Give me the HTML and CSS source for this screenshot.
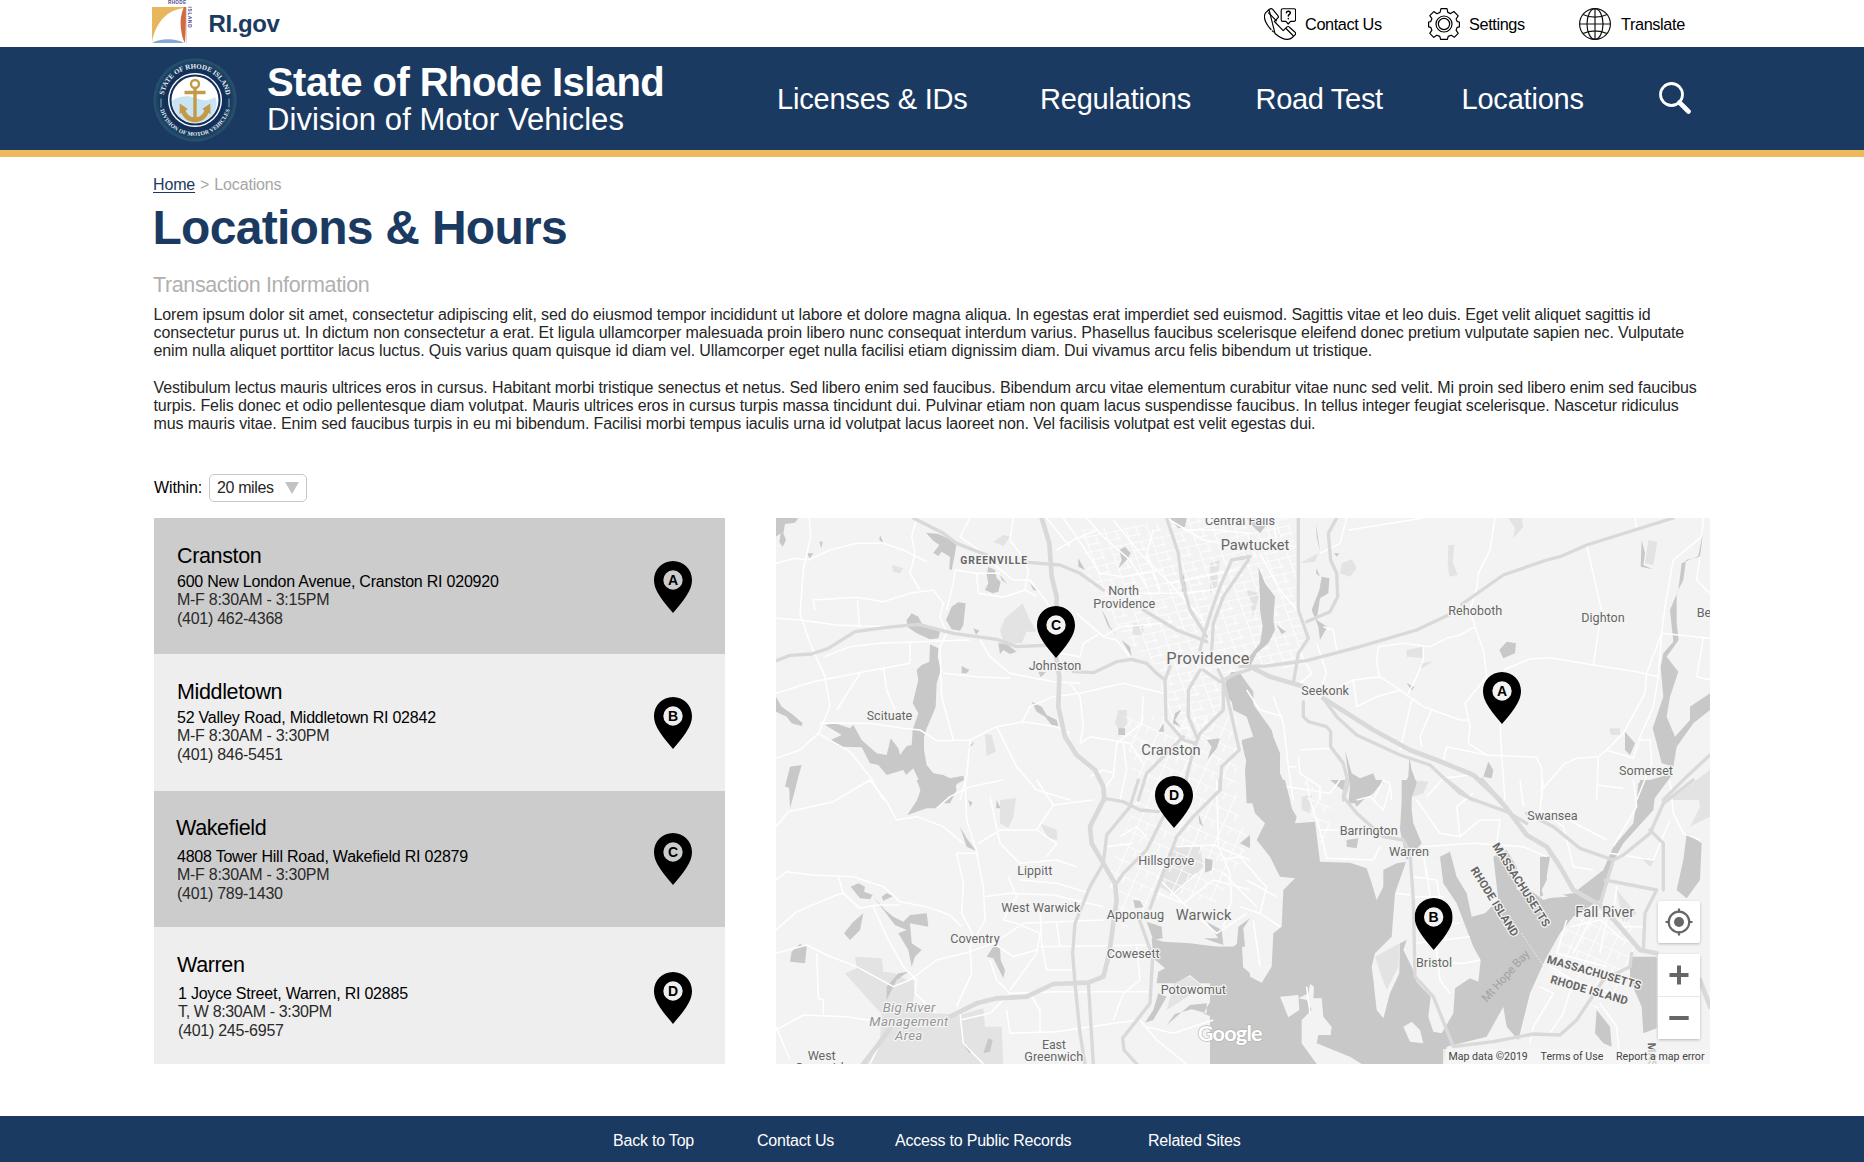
FILE: index.html
```html
<!DOCTYPE html>
<html lang="en">
<head>
<meta charset="utf-8">
<title>Locations &amp; Hours - Rhode Island DMV</title>
<link rel="stylesheet" href="styles.css">
</head>
<body>
<svg class="defs" width="0" height="0" aria-hidden="true">
  <symbol id="pin" viewBox="0 0 38 52"><path fill-rule="evenodd" d="M19 0C8.4 0 0 8.4 0 19c0 6.2 2.8 11.500 6 16.500C10 41.500 15 47 19 52c4-5 9-10.500 13-16.500 3.200-5 6-10.300 6-16.500C38 8.400 29.600 0 19 0zM19 9.300a9.700 9.700 0 1 1 0 19.400 9.700 9.700 0 0 1 0-19.400z"/></symbol>
</svg>

<div class="topbar">
  <a class="brand">
    <svg class="brand-logo" viewBox="0 0 42 46" width="42" height="46">
      <path d="M2 7H34V8C17 10 6 22 2 42z" fill="#eab65d"/>
      <path d="M34 7C31 14 30 20 31 29 32 36 33 40 35 43 36 30 36 18 36 7z" fill="#d2693f"/>
      <path d="M2 43C10 38 26 38 34 43z" fill="#87a6d2"/>
      <path d="M36.500 7V43" stroke="#dcdcea" stroke-width="1.200"/>
      <text x="18" y="4.400" class="logo-word" textLength="18">RHODE</text>
      <text transform="translate(37.800 6.500) rotate(90)" class="logo-word" textLength="21">ISLAND</text>
    </svg>
    <span class="brand-name">RI.gov</span>
  </a>
  <div class="utils">
    <a class="util">
      <svg viewBox="0 0 32 32" width="32" height="32" fill="none" stroke="#000" stroke-width="1.150" stroke-linejoin="round" stroke-linecap="round">
        <path d="M5 1.500 1.800 4.700C-.3 7 .6 11.500 2 14.500c1.200 2.500 3 4.900 5 7M8.300 22.900l1 1M11 25.500c3.500 3 8 6 12.500 5.900 2 0 3.700-.8 4.800-1.900l2.700-2.700c.8-.8.8-1.800 0-2.600l-5.500-5c-.8-.8-2-.8-2.800 0l-3.500 3.500-8.800-9.200 3.300-3.300c.8-.8.8-2 0-2.800l-5-6c-.9-.9-2.200-.9-3.700.1z"/>
        <path d="M4.500 4.800l8 8M22 20.500l7 7"/>
        <path d="M18.800.7H30c.9 0 1.600.7 1.600 1.600v9.500c0 .9-.7 1.600-1.600 1.600h-3.500l-2.300 2.600-2.300-2.600h-3.100c-.9 0-1.600-.7-1.600-1.600V2.300c0-.9.700-1.600 1.600-1.600z"/>
        <path d="M22.400 4.800c.2-2.200 3.900-2.100 3.900.1 0 1.600-2 1.500-2 3.200M24.300 10.600v.2" stroke-width="1.500"/>
      </svg>
      <span>Contact Us</span>
    </a>
    <a class="util settings">
      <svg viewBox="0 0 32 32" width="32" height="32" fill="none" stroke="#000" stroke-width="1.200" stroke-linejoin="round">
        <path d="M13 .7h6l.8 3.700 2.900 1.200 3.200-2.100 4.300 4.300-2.100 3.200 1.100 2.600 2.200.4v4.800l-2.200.5-1.100 2.800 2.100 3.200-3.700 3.900-3.300-2-3 1.200-.8 3h-6.800l-.8-3-2.900-1.200-3.200 2.100-3.900-3.900 2.100-3.200-1.200-2.900-2.100-.5v-4.800l2.100-.4 1.200-2.900-2.100-3.100 4-4 3.100 2.100 3.100-1.300z"/>
        <circle cx="16" cy="16" r="8"/><circle cx="16" cy="16" r="5.600"/>
      </svg>
      <span>Settings</span>
    </a>
    <a class="util">
      <svg viewBox="0 0 32 32" width="32" height="32" fill="none" stroke="#111" stroke-width="1.200">
        <circle cx="16" cy="16" r="15.400"/><ellipse cx="16" cy="16" rx="8" ry="15.400"/>
        <path d="M16 .6v30.800M.6 16h30.800M4 6.500c7 3.500 17 3.500 24 0M4 25.500c7-3.500 17-3.500 24 0"/>
      </svg>
      <span class="translate">Translate</span>
    </a>
  </div>
</div>

<header class="header">
  <svg class="seal" viewBox="0 0 86 86" width="86" height="86">
    <defs>
      <radialGradient id="ring"><stop offset=".7" stop-color="#12305a"/><stop offset=".87" stop-color="#173c60"/><stop offset="1" stop-color="#2b556f"/></radialGradient>
      <path id="arcTop" d="M11.500 43a31.500 31.500 0 0 1 63 0"/>
      <path id="arcBottom" d="M7 43a36 36 0 0 0 72 0"/>
      <clipPath id="disc"><circle cx="43" cy="43" r="23"/></clipPath>
    </defs>
    <circle cx="43" cy="43" r="41.500" fill="url(#ring)"/>
    <circle cx="43" cy="43" r="27" fill="#fff"/><circle cx="43" cy="43" r="25.600" fill="#12305a"/><circle cx="43" cy="43" r="23.500" fill="#fff"/>
    <path clip-path="url(#disc)" d="M18 45C26 39 36 38 44 41c7 3 13 3 19-1 6 12-6 28-20 27-14 0-24-9-25-22z" fill="#c9e4f3"/>
    <g fill="none" stroke="#c39a48" stroke-width="4.200"><circle cx="43" cy="27" r="4" stroke-width="2.400"/><path d="M43 31v33M32.500 35.500h21" stroke-width="3.400"/><path d="M30.500 51c1.500 8.500 7 11.500 12.500 12 5.500-.5 11-3.500 12.500-12" stroke-width="4.600"/></g>
    <path d="M27.500 57l.3-10.500 8 5.500zM58.500 57l-.3-10.500-8 5.500z" fill="#c39a48"/>
    <text class="seal-top"><textPath href="#arcTop" startOffset="5" textLength="89">STATE OF RHODE ISLAND</textPath></text>
    <text class="seal-bottom"><textPath href="#arcBottom" startOffset="10" textLength="93">DIVISION OF MOTOR VEHICLES</textPath></text>
    <path d="M9 41.500v9M77 41.500v9" stroke="#8ba3b5" stroke-width="1"/>
  </svg>
  <div class="titles">
    <div class="state">State of Rhode Island</div>
    <div class="division">Division of Motor Vehicles</div>
  </div>
  <nav class="nav">
    <a>Licenses &amp; IDs</a><a>Regulations</a><a class="road-test">Road Test</a><a>Locations</a>
    <svg class="search" viewBox="0 0 32 32" width="32" height="32" fill="none" stroke="#fff" stroke-linecap="round"><circle cx="12.500" cy="12.500" r="11" stroke-width="2.800"/><path d="M20.500 20.500 29.500 29.500" stroke-width="4.600"/></svg>
  </nav>
</header>

<main class="main">
  <div class="crumbs"><a>Home</a><span class="sep">&gt;</span><span>Locations</span></div>
  <h1>Locations &amp; Hours</h1>
  <h2>Transaction Information</h2>
  <p>Lorem ipsum dolor sit amet, consectetur adipiscing elit, sed do eiusmod tempor incididunt ut labore et dolore magna aliqua. In egestas erat imperdiet sed euismod. Sagittis vitae et leo duis. Eget velit aliquet sagittis id<br>consectetur purus ut. In dictum non consectetur a erat. Et ligula ullamcorper malesuada proin libero nunc consequat interdum varius. Phasellus faucibus scelerisque eleifend donec pretium vulputate sapien nec. Vulputate<br>enim nulla aliquet porttitor lacus luctus. Quis varius quam quisque id diam vel. Ullamcorper eget nulla facilisi etiam dignissim diam. Dui vivamus arcu felis bibendum ut tristique.</p>
  <p class="tight">Vestibulum lectus mauris ultrices eros in cursus. Habitant morbi tristique senectus et netus. Sed libero enim sed faucibus. Bibendum arcu vitae elementum curabitur vitae nunc sed velit. Mi proin sed libero enim sed faucibus<br>turpis. Felis donec et odio pellentesque diam volutpat. Mauris ultrices eros in cursus turpis massa tincidunt dui. Pulvinar etiam non quam lacus suspendisse faucibus. In tellus integer feugiat scelerisque. Nascetur ridiculus<br>mus mauris vitae. Enim sed faucibus turpis in eu mi bibendum. Facilisi morbi tempus iaculis urna id volutpat lacus laoreet non. Vel facilisis volutpat est velit egestas dui.</p>

  <div class="filter">
    <span>Within:</span>
    <div class="select"><span>20 miles</span><i class="caret"></i></div>
  </div>

  <div class="columns">
    <div class="list">
      <section class="office dark">
        <div><h3>Cranston</h3><div class="addr">600 New London Avenue, Cranston RI 020920</div><div>M-F 8:30AM - 3:15PM</div><div>(401) 462-4368</div></div>
        <svg class="pin" viewBox="0 0 38 52" width="38" height="52"><use href="#pin"/><text x="19" y="24">A</text></svg>
      </section>
      <section class="office">
        <div><h3>Middletown</h3><div class="addr">52 Valley Road, Middletown RI 02842</div><div>M-F 8:30AM - 3:30PM</div><div>(401) 846-5451</div></div>
        <svg class="pin" viewBox="0 0 38 52" width="38" height="52"><use href="#pin"/><text x="19" y="24">B</text></svg>
      </section>
      <section class="office dark wakefield">
        <div><h3>Wakefield</h3><div class="addr">4808 Tower Hill Road, Wakefield RI 02879</div><div>M-F 8:30AM - 3:30PM</div><div>(401) 789-1430</div></div>
        <svg class="pin" viewBox="0 0 38 52" width="38" height="52"><use href="#pin"/><text x="19" y="24">C</text></svg>
      </section>
      <section class="office warren">
        <div><h3>Warren</h3><div class="addr">1 Joyce Street, Warren, RI 02885</div><div class="hours">T, W 8:30AM - 3:30PM</div><div>(401) 245-6957</div></div>
        <svg class="pin" viewBox="0 0 38 52" width="38" height="52"><use href="#pin"/><text x="19" y="24">D</text></svg>
      </section>
    </div>

    <div class="map">
      <svg viewBox="18 24 2802 1638" width="934" height="546">
        <defs>
          <pattern id="streets" width="62" height="46" patternUnits="userSpaceOnUse" patternTransform="rotate(-12) skewX(8)"><path d="M0 1H62M1 0V46M32 0V30M0 25H40" class="street"/></pattern>
          <pattern id="streets2" width="58" height="44" patternUnits="userSpaceOnUse" patternTransform="rotate(24)"><path d="M0 1H58M1 0V44M28 0V22" class="street"/></pattern>
        </defs>

        <g class="park">
          <path d="M758 280 775 320 800 365 770 365 755 400 700 400 690 360 705 325 735 300zM1090 340 1122 342 1118 380 1088 372zM1045 600 1070 600 1072 640 1050 665 1035 640zM645 672 665 675 678 725 650 738zM670 95 700 75 720 80 700 108zM365 165 400 175 390 190 370 185zM1320 160 1350 150 1340 230 1320 250z"/>
          <g transform="translate(1410)"><path d="M305 160 335 148 350 175 330 200 300 190zM625 105h18l-5 50 15 40-25 5-5-40zM805 24H845L850 50 820 85 825 55zM500 420 550 410 550 445 500 440zM1225 90 1252 95 1240 165 1215 160zM1290 870 1410 780V870zM540 460 578 455 545 475zM1108 655H1140V675H1112zM510 810 565 815 550 850 520 860zM180 160 235 130 225 155zM20 240 60 250 40 320z"/></g>
          <g transform="translate(0 810)"><path d="M255 530 335 535 340 575 375 580 410 600 430 600 435 640 420 695 500 700 570 705 640 685 645 740 695 740 700 852H285L330 780 335 700 305 670 225 580 260 565zM690 60 738 55 730 110 715 145 690 130zM1200 200H1290L1300 260 1215 345 1170 320zM810 130 860 150 862 180 835 175zM1215 600 1260 590 1300 620 1190 690z"/></g>
          <g transform="translate(1410 810)"><path d="M185 50 215 45 210 100 185 90zM1370 0H1410V110L1350 140 1380 80zM1130 330 1190 400 1150 430zM1200 230 1245 240 1230 260z"/></g>
        </g>

        <g>
          <path fill="url(#streets)" d="M930 60 1180 40 1290 24H1560L1600 300 1600 480 1430 470 1380 520 1340 640 1290 700 1180 640 1170 480 1080 400 1030 330 960 220z"/>
          <path fill="url(#streets2)" d="M1060 620 1400 620 1400 900 1440 1000 1340 1180 1200 1150 1060 1260 1010 1100 1100 870zM2400 1210 2580 1200 2600 1380 2480 1500 2330 1400zM1600 810 1690 880 1660 1040 1620 900z"/>
        </g>

        <g class="water">
          <path d="M18 24H85L75 38 45 42 40 70 48 90 38 110 28 95 32 70 18 80zM468 68 505 72 540 88 560 100 555 130 545 180 538 178 540 140 515 125 505 138 490 128 508 105 490 92zM655 170 675 180 680 205 692 215 685 245 668 250 645 240 655 220 650 195zM565 277 587 280 580 345 570 362 545 358 528 330 545 290zM425 310 445 320 455 340 510 365 505 385 480 388 440 370 412 350 410 330zM685 400 710 402 740 425 720 432 700 420 690 432z"/>
          <path d="M480 403 505 415 503 440 512 480 500 520 497 590 485 620 470 655 462 680 462 720 470 765 490 790 520 795 540 805 580 797 582 810 555 825 560 840 540 880H438L455 830 430 775 408 795 400 780 350 795 325 765 300 760 275 712 210 710 182 690 215 675 165 645 195 640 240 655 250 645 275 690 320 730 350 735 362 685 385 715 390 735 410 708 425 705 428 660 445 610 428 580 445 510 440 480 455 465 478 455z"/>
          <path d="M18 560 35 590 70 615 98 640 95 648 65 640 50 620 18 605zM60 770 95 765 85 800 65 870H58L70 835 45 830zM575 468 598 480 590 490 575 490zM1065 110 1082 130 1070 150 1045 175 1055 150 1048 120zM785 575 815 590 830 615 860 630 865 650 845 645 825 620 800 605zM1200 24H1250L1245 50 1225 55zM1365 520 1385 485 1410 490 1450 545V640L1400 590 1370 560zM1415 695 1450 690V810L1425 740zM1240 190 1250 240 1245 260 1235 240zM1235 598 1215 630 1232 650 1208 640 1215 610zM1045 655H1065V675H1045zM995 300 1010 325 1020 350 1040 375 1015 350zM1055 390 1080 410 1085 440zM925 145 945 180 925 170zM690 195 712 222 695 210zM780 220 802 242 790 240zM330 75 340 98 328 90zM110 130 130 130 120 145zM610 355 628 362 618 374zM805 485 828 487 812 502zM590 715 612 695 608 705zM1165 665 1180 640 1182 665zM148 96 158 94 154 115zM1310 690 1350 685 1340 715 1312 750 1325 710z"/>
          <g transform="translate(1410)">
            <path d="M55 170 75 220 105 260 100 330 105 360 85 400 50 430 30 470 20 450 60 400 68 350 60 300 60 260zM20 24H80L75 50 60 70 40 50zM245 200 268 205 265 250 240 265 230 330 262 350 240 390 235 350 215 300 238 240zM228 40 240 125 230 80zM230 175 240 200 228 190zM-30 545 20 545 45 590 95 660 100 680 120 730 120 790 138 830 138 880H20L15 780 20 740 5 690 40 680 20 620-20 600zM315 720 335 790 360 805 400 790 415 830 400 850 355 880H325L330 830zM488 880V830L505 800 508 740 515 780 530 820 510 880zM800 395 828 400 825 430 790 445 778 420zM1155 665 1185 700 1170 735 1155 720zM745 755 760 780 755 805 730 800zM1205 90 1215 130 1210 165 1238 178 1202 170zM500 520 523 530 515 542zM110 345 138 365 125 372zM282 130 298 130 290 140z"/>
            <path d="M1390 60 1380 140 1338 150 1330 210 1310 250 1310 340 1316 390 1280 440 1315 485 1290 560 1280 620 1305 680 1350 630 1350 590 1410 550V600L1360 640 1310 710 1300 770 1265 760 1250 700 1238 655 1270 560 1262 470 1270 430 1300 395 1290 300 1315 240 1325 160 1375 138zM1195 820 1300 790 1240 870H1190z"/>
          </g>
          <g transform="translate(0 810)">
            <path d="M440 0H565L545 50 500 85 470 85 412 105 455 40zM50 0H82L75 30 60 85 58 30zM242 320 265 310 285 320 282 335 308 345 300 358 270 355zM335 350 350 340 370 348 340 362zM310 350 345 390 370 410 400 425 420 405 470 400 475 440 420 430 425 490 455 510 435 530 425 560 415 510 385 460 410 450 375 435zM280 400 270 450 240 480 222 460 250 425zM90 492 110 500 105 550 60 545 65 515zM670 500 690 500 692 540 705 570 700 595 685 565 670 535 650 530zM1305 235 1328 240 1325 270 1305 278zM570 140 590 175 618 212 590 200zM1090 360 1110 362 1120 382 1095 385zM350 660 350 620 385 580 415 575 380 600zM578 790 605 815 598 820zM640 820 655 775 668 780 660 815zM595 60 608 68 600 80zM680 60 692 85 678 85zM1285 100 1300 140 1288 130z"/>
            <path d="M1145 475 1180 485 1260 490 1300 495 1345 500 1415 500 1418 560 1440 580V852H1355L1335 715 1300 700 1330 650 1370 610 1290 610 1260 585 1215 610 1160 610 1165 575 1185 565 1150 535zM1130 425 1175 440 1178 475 1150 480zM1165 640 1190 650 1150 720 1125 728 1150 690zM1310 670 1260 675 1190 735 1215 702 1265 688 1310 700zM1310 425 1355 450 1360 495 1300 475 1345 475zM1440 415 1405 440 1400 500 1425 500 1420 445zM1410 190 1440 165V205z"/>
          </g>
          <g transform="translate(1410 810)">
            <path d="M18 0H135L150 60 165 130 225 125 240 245 330 248 380 265 395 310 410 360 430 320 430 270 470 250 600 230 630 215 650 290 680 340 695 410 735 400 775 360 760 230 800 210 830 260 830 330 870 330 910 360 960 345 1000 340 1090 270 1120 200 1180 130 1200 0H1250L1240 90 1150 190 1110 260 1080 360 1000 410 960 460 915 540 870 640 835 780 790 800 620 810 610 852H-90V500H-20L5 480 10 580 65 608 95 560 100 460 125 440 130 330 165 295 120 290 90 230 50 180 75 130 45 100z"/>
            <path d="M1340 160 1385 190 1380 300 1340 355 1310 330 1330 240zM1170 530H1250V745L1210 760 1205 680 1170 600zM1070 690 1110 740 1115 800 1090 790 1065 760zM340 60 350 30 400 0 440 0 390 40 350 80zM485 0H515L515 90 520 130 545 190 500 240 480 150 485 60zM900 230 930 230 920 290 925 340 900 350zM270 0H330L320 40zM320 180 355 175 350 205 320 200zM140 60 170 110 165 130z"/>
          </g>
        </g>

        <g class="land" transform="translate(1410 810)">
          <path d="M455 470 465 340 500 240 600 230 610 310 650 370 700 500 722 540 715 605 690 595 645 625 640 700 605 760 580 755 565 710 572 650 530 605 515 560 490 510 500 480 480 490 478 580 450 640 430 715 410 690 400 600 395 560 405 520zM120 650 175 645 178 690 145 712zM210 612 222 620 220 655 245 655 250 710 275 740 272 765 235 765 230 790 330 830 365 852H230L185 790 185 720 215 690 200 660 175 655 205 640zM490 740 515 725 540 750 550 790 510 785zM610 852 620 800 740 770 790 680 800 740 835 780H900V852zM690 330 740 290 760 350 740 395 700 405zM912 355 905 330 925 290 945 300 935 330 985 350z"/>
        </g>
        <path class="park" transform="translate(1410 810)" d="M405 530 480 490 475 560 440 630 425 590z"/>

        <g class="minor">
          <path d="M118 24 122 80 100 180 90 310 120 400 165 500 180 590 145 670 90 720 18 745M18 160 75 145 115 150 180 120 260 100 340 100 400 120 470 155M18 325 90 330 200 345 270 348 410 350M135 300 130 270 260 262 340 275 420 250 490 240 520 280 510 320 530 370 510 410 515 560 550 690M262 270 268 348M440 24 425 80 435 130 420 190 450 240M18 550 130 515 260 490 420 460 420 400M165 440 240 410 330 400 450 395 600 390M270 490 200 600M340 470 350 540 375 600M150 640 300 640 400 655 450 660 500 692 600 690 680 650 760 635 860 650 900 670M680 650 740 770 800 840 900 870M145 670 240 725 300 800 340 870M600 24 570 80 640 130 680 170 730 210 780 210 840 290M730 24 720 90 750 130 775 180 765 240 800 260M555 180 620 190 690 190M620 190 625 250 700 262 765 240M530 300 550 220 555 180M630 390 660 440 720 490 850 515 930 520M520 490 620 500 720 505M755 640 780 590 850 560 930 550 1060 520 1180 550M600 690 590 800 570 870M880 24 940 110 990 190 1060 200 1180 180M950 24 1000 80 1080 150 1130 230M830 24 900 110M860 120 910 90 980 60M920 310 1000 380 1040 390 1080 440M870 430 930 440 940 400 990 370M1000 380 1050 350 1180 340M1120 560 1115 640 1040 700 1030 800 1000 840M930 700 960 680 1080 700 1120 760M900 520 930 560 940 650 930 700M1060 700 1070 780 1050 870M960 800 1000 780 1030 790M1190 24 1300 90 1420 110M1030 30 1110 130 1200 220 1300 330M1150 60 1130 130 1170 240M1240 60 1340 60 1440 70M1200 220 1400 180M1100 250 1230 250 1330 240"/>
          <g transform="translate(1410)"><path d="M765 24 750 120 715 190 710 235 690 300 705 350 730 420 740 500 675 580 690 650 685 700 740 735 890 742 905 775V870M705 350 660 375 620 385 570 410 490 400 415 410 410 460 420 505M550 410 550 450 530 500 500 560M790 480 870 447 930 443 1060 465 1190 485 1255 500M1040 105 1075 260 1085 300 1060 465M1390 24 1385 80 1300 150 1275 290 1265 370 1220 490 1215 550 1150 670 1100 720 1180 745 1200 680 1240 590 1255 500 1265 370 1410 385M240 560 340 510 420 500 480 540 550 590 660 630 685 630M340 510 350 590 410 560 480 540M905 840 975 760 1010 745 1075 740 1100 720M1075 740 1070 870M1070 825 1150 835M515 570 480 720M575 600 540 680 545 710M1380 140 1370 210 1410 250M1390 385 1370 500 1410 510M325 60 550 24M320 24 300 100 240 130M780 640 785 735 795 870M740 735 620 710 610 750M690 795 610 805 560 860M100 560 130 640 145 770 160 870M145 770 170 770M180 720 270 715M175 740 180 790 240 830 240 870M20 540 60 600 130 620M180 430 215 490 180 520M260 490 240 540M230 400 260 490M250 350 280 360 290 420M60 130 120 240 180 310M100 24 110 100 170 110M1200 690 1230 690 1235 760 1190 870M1185 24 1190 60M400 870 430 810 450 820 455 870"/></g>
          <g transform="translate(0 810)"><path d="M18 140 55 95 190 65 300 0 350 65 380 120 440 110 520 140 580 190M500 85 540 50 600 20 700 0M18 300 50 275 130 285 250 290 340 320 390 365 470 380 540 405 575 440M18 450 80 395 200 345 220 340 270 385 320 375 390 375M205 290 220 340M18 520 110 495 170 525 260 560 370 620 420 600 500 540 600 515 670 490 760 430 1000 420M140 520 145 655 160 660V710M18 750 100 705 230 710 325 725M18 740 60 840M310 380 350 470 400 560 440 600 435 640 500 700M560 220H620L640 320 645 420 600 500 605 580 560 680M560 220 580 310 575 400 612 470M585 0 590 120 625 230M660 50 690 190 750 250 860 240 920 260M625 190 690 150 800 150 860 190 830 230M800 150 850 75 970 60M800 0 850 75M640 350 720 340 850 345 1000 380M715 290 740 350 700 420 740 430 810 460 800 520 720 630M750 300 860 310 960 340M810 380 815 490 830 570 910 570M670 490 730 530 800 510M660 540 680 600 720 640 660 700 570 720M710 690 720 760 860 755 1100 720M785 650 810 690V755M720 640 860 635 1140 635M860 430 870 500M810 500 1140 495M1100 500 1110 600 1060 640 1030 720M1050 170 1100 140 1130 170M1010 200 1090 190M1160 340 1240 370 1340 460 1430 400M1220 200 1330 195 1440 240M1340 0 1345 200 1380 280 1385 360 1360 440M1110 720 1160 780 1250 852M1130 740 1210 760 1330 720M570 700 580 790 640 852M340 770 300 852M1200 350 1280 280M1160 290 1240 370 1330 300 1440 330"/></g>
          <g transform="translate(1410 810)"><path d="M140 20 270 40 300 0M200 0 210 60 240 150 260 235 400 240 420 200M240 150 380 150 460 170M350 60 390 50 430 90 450 20M530 60 600 160 660 170 720 120 780 120M545 200 700 190 850 200 920 230M660 170 650 80 700 40M780 120 770 190M840 0 850 80M560 290 550 220M520 290 590 300M520 350 610 350M520 430 660 430M525 490 690 470M530 550 670 550 720 540M560 270 600 600 630 640M590 300 620 480M470 340 510 345M910 0 900 90 970 140 1000 260 1060 270M930 90 1100 180M1180 0 1190 80 1120 200M930 560 1000 600 1120 640M900 620 940 640 880 740 870 790M980 420 950 520 1100 560M990 440 1080 420 1150 480M1060 400 1000 520M1100 420 1080 520M1000 600 970 700 930 760M1080 670 1130 740 1140 852M1290 0 1300 100 1330 160 1380 180M1290 120 1240 240 1110 220M1130 320 1120 400 1100 400M1140 440 1210 440M-60 240 0 230 60 300 80 320 60 400 0 380M-50 280 50 380M20 300 110 350M40 420 60 560M60 400 120 440M200 620 210 700"/></g>
        </g>

        <g class="highway">
          <path class="thick" d="M815 24 838 100 845 200 860 260 858 440 868 500 865 590 885 680 920 735 975 780 1000 830 1003 870"/>
          <path d="M430 24 520 70 560 100 650 135M775 157 870 165 930 190 1000 240M1120 300 1220 360 1310 395M18 452 60 436 125 432 175 415 255 365 350 352 445 343 550 370 680 388 740 410 850 405M910 485 970 488 1040 455 1085 448 1130 460 1160 490 1185 510 1200 470M1185 510 1188 630 1240 690 1275 700M1190 24 1225 130 1235 210 1260 300 1310 380M1440 140 1385 150 1350 230 1325 300 1300 380 1290 420M1290 480 1255 540 1255 620 1280 680M1435 150 1360 260 1330 340 1325 420M1345 480 1360 510 1360 600 1290 670 1270 720 1250 800 1240 870M1300 480 1350 515 1400 490 1440 478M1360 510 1408 720 1355 770 1350 840M1240 680 1130 790 1105 870"/>
          <g transform="translate(1410)"><path d="M0 470 80 468 200 452 360 410 530 360 625 315M665 283 790 195 920 150 960 140 1040 105 1300 24M250 565 290 620 350 675 480 735 570 765 660 850 700 870M175 24V300L205 385 175 430 160 520M290 24 265 70 272 150 290 190 293 260 270 305 200 335M190 575V620L205 635 260 650 272 665V710L310 760 325 820 310 870M1410 735 1340 800 1270 870M30 140 0 145"/><path class="thick" d="M30 470 90 500 185 528M250 565 400 660 510 720 590 750 700 795 780 870"/></g>
          <g transform="translate(0 810)"><path class="thick" d="M1003 55 960 140 965 190 1000 250 1035 310 1040 360 1030 430 1018 520 1000 590 955 608 850 612 770 650 680 655 620 670 540 710M360 745 320 800 280 852"/><path d="M1105 0 1080 80 1010 165 1000 250 960 320 915 430 908 520 915 610 930 760 945 852M955 608 970 852M1003 55 1060 65 1110 90 1165 95M1350 0V30L1270 110 1220 170 1175 290 1140 385M1180 110 1130 210 1060 280 1040 310M1105 410 1130 480 1148 530 1140 670 1058 775 1062 810 1100 852"/></g>
          <g transform="translate(1410 810)"><path d="M620 0 690 55 800 95 860 130M860 100 940 140 1020 205 1120 240 1150 225 1230 160 1270 70 1360 0M1120 240 1080 375M1095 300 1250 330 1215 400 1210 510M1230 150 1270 190V330M320 0 310 50 350 100 430 170 490 180 510 220 520 360 525 590 580 650 640 800 760 785 880 762 960 765 1010 720 1090 600 1170 560 1175 520"/><path class="thick" d="M725 0 800 85 860 165 920 200 960 260 1000 330 1080 375 1140 440 1200 510 1250 520M1380 600 1410 680"/></g>
        </g>
        <path class="border" d="M2255 1270 2318 1365"/>

        <g class="labels">
          <g class="town">
            <text x="571" y="163" textLength="200" class="caps">GREENVILLE</text>
            <text x="1015" y="255" textLength="92">North</text><text x="970" y="294" textLength="186">Providence</text>
            <text x="776" y="480" textLength="158">Johnston</text><text x="290" y="630" textLength="137">Scituate</text>
            <text x="1305" y="45" textLength="210">Central Falls</text>
            <text x="1352" y="120" textLength="206" class="mid">Pawtucket</text>
            <text x="1114" y="735" textLength="178" class="mid">Cranston</text>
            <text x="1189" y="462" textLength="249" class="big">Providence</text>
            <text x="2035" y="316" textLength="162">Rehoboth</text><text x="2434" y="336" textLength="130">Dighton</text><text x="2780" y="322">Berkley</text>
            <text x="1594" y="555" textLength="143">Seekonk</text><text x="2547" y="796" textLength="162">Somerset</text>
            <text x="742" y="1095" textLength="105">Lippitt</text><text x="1105" y="1066" textLength="168">Hillsgrove</text>
            <text x="694" y="1205" textLength="237">West Warwick</text><text x="1010" y="1227" textLength="172">Apponaug</text>
            <text x="1217" y="1229" textLength="167" class="mid">Warwick</text><text x="541" y="1298" textLength="148">Coventry</text>
            <text x="1010" y="1344" textLength="159">Cowesett</text><text x="1172" y="1451" textLength="196">Potowomut</text>
            <text x="816" y="1616" textLength="72">East</text><text x="763" y="1654" textLength="177">Greenwich</text>
            <text x="113" y="1650" textLength="84">West</text><text x="75" y="1687" textLength="158">Greenwich</text>
            <text x="1709" y="976" textLength="174">Barrington</text><text x="1857" y="1039" textLength="120">Warren</text>
            <text x="2272" y="929" textLength="151">Swansea</text><text x="1938" y="1370" textLength="108">Bristol</text>
            <text x="2416" y="1220" textLength="177" class="mid">Fall River</text>
          </g>
          <g class="area"><text x="338" y="1506" textLength="158">Big River</text><text x="298" y="1548" textLength="237">Management</text><text x="375" y="1590" textLength="82">Area</text></g>
          <text class="bay" transform="translate(2150 1478) rotate(-48)" textLength="195">Mt Hope Bay</text>
          <g class="state-label">
            <text transform="translate(2166 1008) rotate(57.500)" textLength="290">MASSACHUSETTS</text>
            <text transform="translate(2101 1080) rotate(58)" textLength="238">RHODE ISLAND</text>
            <text transform="translate(2329 1358) rotate(16)" textLength="292">MASSACHUSETTS</text>
            <text transform="translate(2339 1418) rotate(16)" textLength="240">RHODE ISLAND</text>
            <text transform="translate(2633 1598) rotate(88)">MASSACHUSETTS</text>
          </g>
          <text class="google" x="1283" y="1594" textLength="195">Google</text>
        </g>

        <g class="map-pins">
          <g transform="translate(801 288) scale(3)"><circle class="pin-bg" cx="19" cy="19" r="10"/><use href="#pin" width="38" height="52"/><text x="19" y="24">C</text></g>
          <g transform="translate(1155 798) scale(3)"><circle class="pin-bg" cx="19" cy="19" r="10"/><use href="#pin" width="38" height="52"/><text x="19" y="24">D</text></g>
          <g transform="translate(2139 486) scale(3)"><circle class="pin-bg" cx="19" cy="19" r="10"/><use href="#pin" width="38" height="52"/><text x="19" y="24">A</text></g>
          <g transform="translate(1934 1164) scale(3)"><circle class="pin-bg" cx="19" cy="19" r="10"/><use href="#pin" width="38" height="52"/><text x="19" y="24">B</text></g>
        </g>
      </svg>
      <div class="controls">
        <button class="locate" aria-label="Locate"><svg viewBox="0 0 28 28" width="28" height="28" fill="none" stroke="#666" stroke-width="2.200"><circle cx="14" cy="14" r="10.300"/><path d="M14 .5v4M14 23.500v4M.5 14h4M23.500 14h4"/><circle cx="14" cy="14" r="5" fill="#666" stroke="none"/></svg></button>
        <div class="zoom">
          <button aria-label="Zoom in"><svg viewBox="0 0 20 20" width="20" height="20"><path d="M8 .5h4V8h7.500v4H12v7.500H8V12H.5V8H8z" fill="#666"/></svg></button>
          <button aria-label="Zoom out"><svg viewBox="0 0 20 20" width="20" height="20"><path d="M.3 8h19.400v4H.3z" fill="#666"/></svg></button>
        </div>
      </div>
      <div class="credits"><span>Map data ©2019</span><span>Terms of Use</span><span class="report">Report a map error</span></div>
    </div>
  </div>
</main>

<footer class="footer"><a>Back to Top</a><a>Contact Us</a><a>Access to Public Records</a><a>Related Sites</a></footer>
</body>
</html>
```
FILE: styles.css
```css
* { box-sizing: border-box; }
body { margin: 0; background: #fff; color: #000; font-family: "Liberation Sans", Arial, sans-serif; font-size: 16px; line-height: 18.2px; white-space: nowrap; overflow: hidden; }
h1, h2, h3, p { margin: 0; }
svg { display: block; flex: none; }
.defs { position: absolute; }

.topbar { height: 47px; display: flex; justify-content: space-between; padding: 0 179px 0 150px; }
.brand { display: flex; align-items: center; gap: 16.500px; }
.brand-logo { align-self: flex-start; }
.brand-name { font-size: 24px; line-height: 24px; font-weight: 700; letter-spacing: -.4px; color: #1b3a61; }
.logo-word { font: bold 4.600px "Liberation Sans", sans-serif; fill: #4a4a8c; }
.utils { display: grid; grid-template-columns: 164px 151px 106px; }
.util { display: flex; align-items: center; gap: 9px; font-size: 16.300px; line-height: 18px; letter-spacing: -.38px; }
.util .translate { margin-left: 1px; }

.header { height: 110px; background: #1b3a61; border-bottom: 7px solid #eeb95b; color: #fff; display: flex; padding-left: 151.500px; }
.seal { margin-top: 10px; }
.seal text { font-family: "Liberation Serif", serif; font-weight: 700; fill: #e8eef2; }
.seal-top { font-size: 7px; }
.seal-bottom { font-size: 5.700px; }
.titles { margin: 13px 0 0 29.500px; width: 510px; }
.state { font-size: 40px; line-height: 44px; font-weight: 700; letter-spacing: -.56px; }
.division { margin-top: -1px; font-size: 31px; line-height: 34px; letter-spacing: .08px; }
.nav { display: grid; grid-template-columns: 263px 215.500px 206px 197px 32px; align-items: center; font-size: 29px; line-height: 32px; letter-spacing: -.2px; }
.nav .road-test { letter-spacing: -.3px; }
.search { margin-bottom: 2px; }

.main { padding: 19px 154px 0; }
.crumbs { display: flex; line-height: 18px; color: #a6a6a6; letter-spacing: -.15px; margin-left: -1px; }
.crumbs a { color: #1b3a61; text-decoration: underline; text-underline-offset: 2px; text-decoration-thickness: 1px; }
.crumbs .sep { margin: 0 5px; }
h1 { margin-top: 10px; font-size: 48px; line-height: 48px; color: #1b3a61; letter-spacing: -.72px; margin-left: -1.500px; }
h2 { margin-top: 21px; font-size: 21.500px; line-height: 24px; font-weight: 400; color: #b0b0b0; letter-spacing: -.38px; margin-left: -1px; }
p { margin-top: 9px; color: #262626; letter-spacing: -.112px; margin-left: -.5px; }
p.tight { margin-top: 18.200px; letter-spacing: -.131px; }

.filter { margin-top: 41px; display: flex; align-items: center; height: 28px; gap: 7px; letter-spacing: -.13px; }
.select { width: 98px; height: 28px; border: 1.500px solid #c8c8c8; border-radius: 5px; display: flex; align-items: center; justify-content: space-between; padding: 0 7px; letter-spacing: -.37px; color: #262626; }
.caret { border: 7px solid transparent; border-top: 12px solid #c2c2c2; border-bottom: 0; }

.columns { margin-top: 16px; display: flex; justify-content: space-between; }
.list { width: 571px; }
.office { height: 137px; background: #eee; display: flex; justify-content: space-between; padding: 25.500px 33px 0 23px; line-height: 18.400px; letter-spacing: -.27px; color: #2a2a2a; }
.office.dark { height: 136px; background: #ccc; }
.office h3 { font-size: 21.500px; line-height: 24px; font-weight: 400; letter-spacing: -.36px; margin-bottom: 5px; color: #000; }
.office .addr { color: #000; letter-spacing: -.22px; }
.pin { margin-top: 17.500px; }
.pin text, .map-pins text { font: bold 14px "Liberation Sans", sans-serif; text-anchor: middle; fill: #000; }
.wakefield h3, .warren h3 { margin-bottom: 8px; margin-left: -1px; }
.wakefield { padding-top: 24.500px; }
.warren { padding-left: 24px; }
.warren .hours { letter-spacing: -.36px; }
.warren .pin { margin-top: 19.500px; }

.map { position: relative; width: 934px; height: 546px; background: #f3f3f3; overflow: hidden; }
.water { fill: #c8c8c8; }
.land { fill: #f3f3f3; }
.park { fill: #e3e3e3; }
.street { fill: none; stroke: #fff; stroke-width: 3; }
.minor { fill: none; stroke: #fff; stroke-width: 4.500; stroke-linejoin: round; }
.highway { fill: none; stroke: #d9d9d9; stroke-width: 10; stroke-linejoin: round; stroke-linecap: round; }
.highway .thick { stroke-width: 14; }
.border { fill: none; stroke: #eee; stroke-width: 3; stroke-dasharray: 5 5; }
.labels text { font-family: Roboto, sans-serif; font-size: 38px; fill: #666; stroke: #f5f5f5; stroke-width: 7px; stroke-linejoin: round; paint-order: stroke; }
.labels .mid { font-size: 44px; }
.labels .big { font-size: 49px; }
.labels .caps { font-size: 31px; font-weight: 700; }
.labels .area text { font-size: 40px; font-style: italic; fill: #959595; }
.labels .bay { font-size: 35px; fill: #a2a2a2; stroke: none; }
.labels .state-label text { font-size: 34px; font-weight: 700; }
.labels .google { font-family: Lato, sans-serif; font-size: 65px; font-weight: 700; fill: #fff; stroke: #b5b5b5; stroke-width: 4px; }
.pin-bg { fill: #f3f3f3; }

.controls { position: absolute; right: 10px; top: 383px; display: grid; gap: 11px; }
.controls button { width: 42px; height: 42px; border: 0; padding: 0; background: #fff; display: grid; place-items: center; }
.controls .locate, .zoom { border-radius: 2px; box-shadow: 0 1px 3px rgba(0, 0, 0, .25); }
.controls .zoom button + button { height: 43px; box-shadow: inset 0 1px #e8e8e8; }
.credits { position: absolute; right: 0; bottom: 0; height: 15px; width: 267px; padding: 0 5.500px; display: flex; justify-content: space-between; background: rgba(245, 245, 245, .75); color: #444; font: 10.600px/15px Roboto, sans-serif; }

.footer { margin-top: 52px; height: 46px; background: #1b3a61; color: #fff; display: grid; grid-template-columns: 144px 138px 253px auto; padding: 15px 0 0 613px; justify-content: start; line-height: 20px; letter-spacing: -.21px; }
```
